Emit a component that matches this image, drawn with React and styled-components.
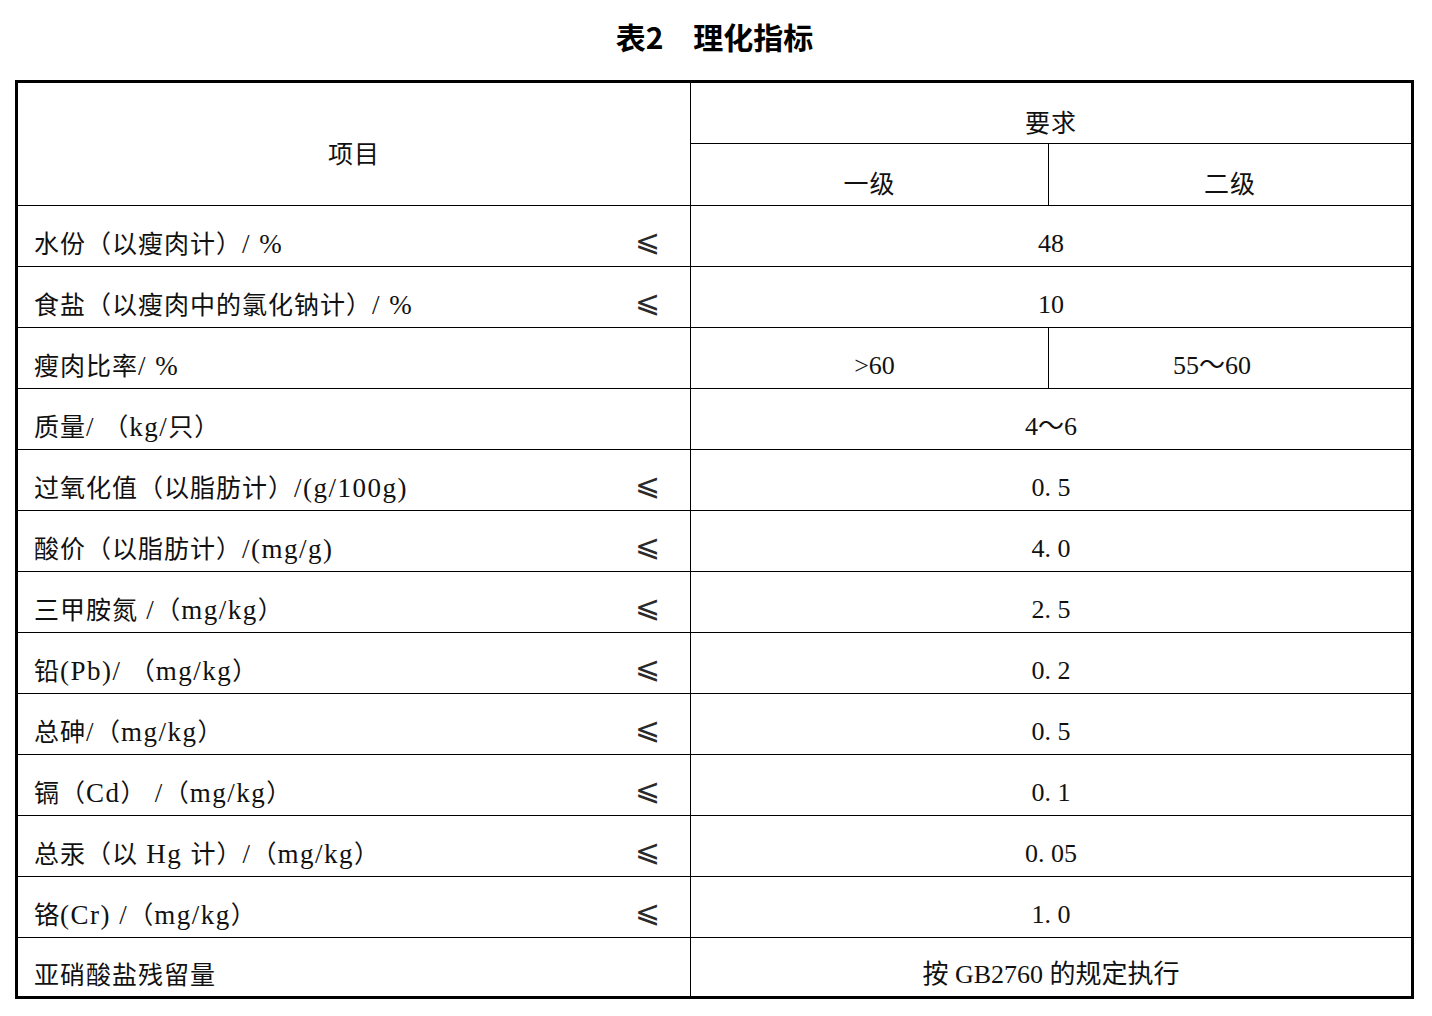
import React from 'react';
import styled, { createGlobalStyle } from 'styled-components';

const GlobalStyle = createGlobalStyle`
    html, body {
        margin: 0;
        padding: 0;
        background: #FFFFFF;
    }
    body {
        font-family: "Liberation Serif", "Noto Sans CJK SC", serif;
        color: #111111;
    }
`

const Page = styled.div`
    width: 1432px;
    padding: 0 0 0 15px;
    box-sizing: border-box;
`

const Title = styled.div`
    width: 1399px;
    height: 72px;
    margin-bottom: 8px;
    display: flex;
    align-items: center;
    justify-content: center;
    font-family: "Noto Sans CJK SC", sans-serif;
    font-weight: 700;
    font-size: 30px;
    line-height: 1;
    color: #000000;
`

const Table = styled.div`
    width: 1399px;
    box-sizing: border-box;
    border: 3px solid #000000;
    display: grid;
    grid-template-columns: 673px 358px 362px;
    grid-template-rows: 61px 62px repeat(12, 61px) 58px;
`

const Cell = styled.div`
    box-sizing: border-box;
    display: flex;
    align-items: center;
    padding-top: 16px;
    font-size: 25px;
    letter-spacing: 1px;
    line-height: 1;
    white-space: pre;
    border-bottom: ${p => (p.$last ? 'none' : '1px solid #000')};
    border-right: ${p => (p.$right ? '1px solid #000' : 'none')};
`

const HeadCell = styled(Cell)`
    justify-content: center;
    grid-row: ${p => p.$row || 'auto'};
    grid-column: ${p => p.$col || 'auto'};
    font-family: "Noto Sans CJK SC", sans-serif;
`

const LabelCell = styled(Cell)`
    justify-content: space-between;
    padding-left: 16px;
    padding-right: 30px;
`

const Latin = styled.span`
    font-size: 27px;
    letter-spacing: 1.5px;
`

const Le = styled.span`
    font-family: "DejaVu Sans", sans-serif;
    font-size: 30px;
    font-weight: 200;
    letter-spacing: 0;
    color: #2a2a2a;
    position: relative;
    top: -3px;
`

const ValueCell = styled(Cell)`
    justify-content: center;
    grid-column: ${p => (p.$span ? 'span 2' : 'auto')};
    letter-spacing: 0;
    font-size: 26px;
    padding-left: ${p => p.$shift > 0 ? p.$shift : 0}px;
    padding-right: ${p => p.$shift < 0 ? -p.$shift : 0}px;
`

const rows = [
    { label: '水份（以瘦肉计）/ %', le: true, value: '48' },
    { label: '食盐（以瘦肉中的氯化钠计）/ %', le: true, value: '10' },
    { label: '瘦肉比率/ %', le: false, split: ['>60', '55～60'] },
    { label: '质量/ （kg/只）', le: false, value: '4～6' },
    { label: '过氧化值（以脂肪计）/(g/100g)', le: true, value: '0. 5' },
    { label: '酸价（以脂肪计）/(mg/g)', le: true, value: '4. 0' },
    { label: '三甲胺氮 /（mg/kg）', le: true, value: '2. 5' },
    { label: '铅(Pb)/ （mg/kg）', le: true, value: '0. 2' },
    { label: '总砷/（mg/kg）', le: true, value: '0. 5' },
    { label: '镉（Cd） /（mg/kg）', le: true, value: '0. 1' },
    { label: '总汞（以 Hg 计）/（mg/kg）', le: true, value: '0. 05' },
    { label: '铬(Cr) /（mg/kg）', le: true, value: '1. 0' },
    { label: '亚硝酸盐残留量', le: false, value: '按 GB2760 的规定执行' },
]

// ascii runs get a slightly wider serif so they take the half-width room of the source
const Label = ({ text }) => (
    <span>
        {text.split(/([\x20-\x7e]+)/).filter(Boolean).map((part, i) =>
            /^[\x20-\x7e]+$/.test(part) ? <Latin key={i}>{part}</Latin> : part
        )}
    </span>
)

export default function App() {
    return (
        <Page>
            <GlobalStyle />
            <Title>表2　理化指标</Title>
            <Table>
                <HeadCell $row="span 2" $right>项目</HeadCell>
                <HeadCell $col="span 2">要求</HeadCell>
                <HeadCell $right>一级</HeadCell>
                <HeadCell>二级</HeadCell>
                {rows.map((r, i) => {
                    const last = i === rows.length - 1;
                    return (
                        <React.Fragment key={i}>
                            <LabelCell $right $last={last}>
                                <Label text={r.label} />
                                {r.le ? <Le>⩽</Le> : null}
                            </LabelCell>
                            {r.split ? (
                                <>
                                    <ValueCell $right $last={last} $shift={10}>{r.split[0]}</ValueCell>
                                    <ValueCell $last={last} $shift={-36}>{r.split[1]}</ValueCell>
                                </>
                            ) : (
                                <ValueCell $span $last={last}>{r.value}</ValueCell>
                            )}
                        </React.Fragment>
                    );
                })}
            </Table>
        </Page>
    );
}
